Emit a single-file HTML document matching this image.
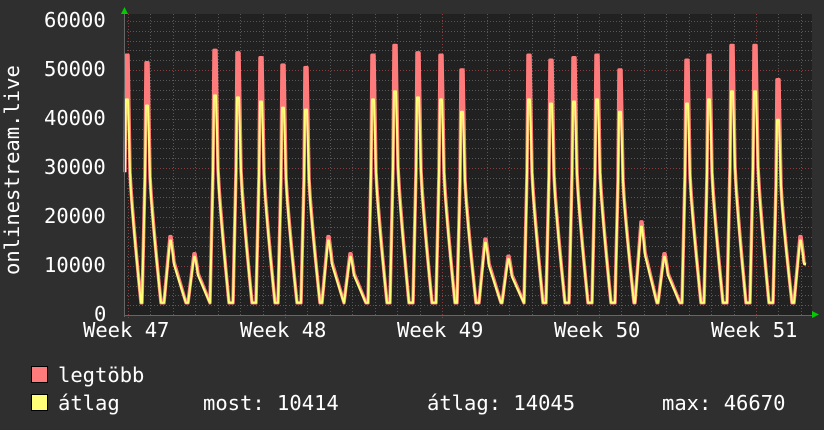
<!DOCTYPE html>
<html><head><meta charset="utf-8"><style>
html,body{margin:0;padding:0;background:#2f2f2f;}
body{width:824px;height:430px;overflow:hidden;position:relative;font-family:"DejaVu Sans Mono","Liberation Mono",monospace;color:#fff;}
.t{position:absolute;font-size:20.5px;white-space:pre;line-height:1;}
.sq{position:absolute;width:15px;height:15px;border:1px solid #000;}
</style></head><body>
<svg id="g" width="824" height="430" style="position:absolute;left:0;top:0"></svg>
<div class="t" style="left:44px;top:10px">60000</div>
<div class="t" style="left:44px;top:59px">50000</div>
<div class="t" style="left:44px;top:108px">40000</div>
<div class="t" style="left:44px;top:157px">30000</div>
<div class="t" style="left:44px;top:206px">20000</div>
<div class="t" style="left:44px;top:255px">10000</div>
<div class="t" style="left:94px;top:304px">0</div>
<div class="t" style="left:83px;top:320px">Week 47</div>
<div class="t" style="left:240px;top:320px">Week 48</div>
<div class="t" style="left:397px;top:320px">Week 49</div>
<div class="t" style="left:554px;top:320px">Week 50</div>
<div class="t" style="left:711px;top:320px">Week 51</div>
<div class="t" style="left:2px;top:275px;transform-origin:0 0;transform:rotate(-90deg)">onlinestream.live</div>
<div class="sq" style="left:31px;top:366px;background:#ff7b7b"></div>
<div class="sq" style="left:31px;top:394px;background:#ffff77"></div>
<div class="t" style="left:58px;top:365px">legtöbb</div>
<div class="t" style="left:58px;top:393px">átlag</div>
<div class="t" style="left:203px;top:393px">most: 10414</div>
<div class="t" style="left:427px;top:393px">átlag: 14045</div>
<div class="t" style="left:662px;top:393px">max: 46670</div>
<script>
var s='';
var X0=124,X1=812,Y0=315,K=49/10000;
s+='<rect x="'+X0+'" y="14" width="'+(X1-X0)+'" height="'+(Y0-14)+'" fill="#212121"/>';
for(var v=2000;v<=60000;v+=2000){var y=Math.round(Y0-v*K)+0.5;var maj=v%10000==0;
s+='<line x1="'+X0+'" x2="'+X1+'" y1="'+y+'" y2="'+y+'" stroke="'+(maj?'#8a3d3d':'#585858')+'" stroke-dasharray="1,2"/>';}
for(var x=128;x<X1;x+=22.43){var xx=Math.round(x)+0.5;var k=Math.round((x-128)/22.43);var maj=k%7==0;
s+='<line x1="'+xx+'" x2="'+xx+'" y1="14" y2="'+(Y0+(maj?3:0))+'" stroke="'+(maj?'#8a3d3d':'#585858')+'" stroke-dasharray="1,2"/>';}
var P=[53000,51500,16000,12500,54000,53500,52500,51000,50500,16000,12500,53000,55000,53500,53000,50000,15500,12000,53000,52000,52500,53000,50000,19000,12500,52000,53000,55000,55000,48000,16000];
var px=[126,146,170,194,214,237,260,282,305,328,350,372,394,417,440,461,485,508,528,550,573,596,619,641,664,686,708,731,754,777,800];
function val(x,yel){var best=2500;
for(var i=0;i<P.length;i++){var d=x-px[i],p=P[i],m=2500,small=p<25000,v=m;
if(small){
 if(d<-6||d>16)continue;
 if(d<0){var f=(d+6)/6;v=m+(p-m)*f;}
 else if(d<=1)v=p;
 else if(d<=3)v=p-(d-1)*0.1*p;
 else{var lo=p*0.72;var f=(d-3)/13;v=lo+(m-lo)*f;}
 if(yel)v*=0.95;
}else{
 if(d<-4||d>15)continue;
 var top=yel?p*0.83:p;
 if(d<-1){var f=(d+4)/3;v=m+(0.55*p-m)*f;}
 else if(d<0){v=0.55*p+(top-0.55*p)*(d+1);}
 else if(d<=2)v=top;
 else if(d<=4){var lo=p*0.55;v=top+(lo-top)*(d-2)/2;}
 else{var lo=p*0.55;var f=(d-4)/11;v=lo+(m-lo)*Math.pow(f,0.85);}
 if(yel&&(d<-1||d>4))v*=0.97;
}
if(v>best)best=v;}
return best;}
function path(yel){var a=[];for(var x=125;x<=806;x++){var v=val(x,yel);if(x>=803)v=Math.max(v,10400);a.push(x+','+(Y0-v*K).toFixed(1));}return a.join(' ');}
s+='<polyline points="'+path(false)+'" fill="none" stroke="#ff7b7b" stroke-width="3.5" stroke-linejoin="round"/>';
s+='<polyline points="'+path(true)+'" fill="none" stroke="#ffff77" stroke-width="2" stroke-linejoin="round"/>';
s+='<line x1="'+X0+'.5" x2="'+X0+'.5" y1="12" y2="'+(Y0+2)+'" stroke="#666"/>';
s+='<line x1="'+X0+'" x2="'+(X1+2)+'" y1="'+Y0+'.5" y2="'+Y0+'.5" stroke="#666"/>';
s+='<polygon points="121,14 128,14 124.5,7" fill="#00cc00"/>';
s+='<polygon points="812,311 812,318 819,314.5" fill="#00cc00"/>';
document.getElementById('g').innerHTML=s;
</script>
</body></html>
